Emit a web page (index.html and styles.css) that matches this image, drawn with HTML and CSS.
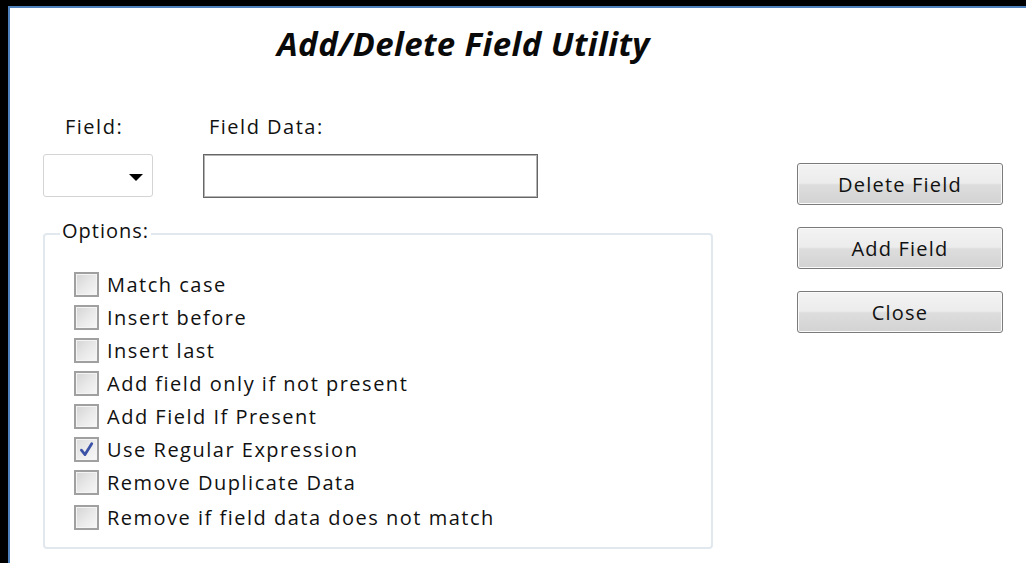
FILE: index.html
```html
<!DOCTYPE html>
<html lang="en">
<head>
<meta charset="utf-8">
<title>Add/Delete Field Utility</title>
<link rel="stylesheet" href="styles.css">
</head>
<body>
<div class="screen">
  <div class="dialog">
    <h1 class="title">Add/Delete Field Utility</h1>
    <div class="main">
      <div class="form">
        <div class="field-row">
          <div class="field-col">
            <div class="label label-field">Field:</div>
            <div class="combo"><span class="combo-arrow"></span></div>
          </div>
          <div class="data-col">
            <div class="label label-data">Field Data:</div>
            <div class="text-input"></div>
          </div>
        </div>
        <fieldset class="options">
          <legend class="options-legend">Options:</legend>
          <ul class="option-list">
            <li class="option"><span class="check"></span>Match case</li>
            <li class="option"><span class="check"></span>Insert before</li>
            <li class="option"><span class="check"></span>Insert last</li>
            <li class="option"><span class="check"></span>Add field only if not present</li>
            <li class="option"><span class="check"></span>Add Field If Present</li>
            <li class="option"><span class="check checked"><svg viewBox="0 0 16 16" width="17" height="17"><path d="M3.2 8.6 L6.6 12.8 L12.9 2.6" fill="none" stroke="#3b52a6" stroke-width="2.6" stroke-linecap="round" stroke-linejoin="round"/></svg></span>Use Regular Expression</li>
            <li class="option"><span class="check"></span>Remove Duplicate Data</li>
            <li class="option option-last"><span class="check"></span>Remove if field data does not match</li>
          </ul>
        </fieldset>
      </div>
      <div class="actions">
        <button class="btn" type="button">Delete Field</button>
        <button class="btn" type="button">Add Field</button>
        <button class="btn" type="button">Close</button>
      </div>
    </div>
  </div>
</div>
</body>
</html>
```

FILE: styles.css
```css
html, body {
  margin: 0;
  padding: 0;
  background: #000;
}

body {
  font-family: "Open Sans", "Noto Sans", sans-serif;
  color: #111;
}

.screen {
  height: 563px;
  box-sizing: border-box;
  padding: 6px 0 0 8px;
}

.dialog {
  height: 100%;
  box-sizing: border-box;
  background: #fff;
  border-top: 2px solid #4f81bd;
  border-left: 2px solid #4f81bd;
}

/* heading */
.title {
  margin: 0;
  padding: 16px 0 0 267px;
  font-size: 33px;
  line-height: 40px;
  letter-spacing: 0.4px;
  font-weight: 700;
  font-style: italic;
  color: #0a0a0a;
}

.main {
  display: flex;
}

.form {
  padding-left: 33px;
  width: 670px;
}

.field-row {
  display: flex;
  margin-top: 51px;
}

.field-col {
  width: 110px;
}

.data-col {
  margin-left: 50px;
}

.label {
  font-size: 20px;
  line-height: 24px;
  letter-spacing: 1.5px;
  margin-bottom: 15px;
}

.label-field {
  padding-left: 22px;
}

.label-data {
  padding-left: 6px;
}

/* dropdown box */
.combo {
  box-sizing: border-box;
  width: 110px;
  height: 43px;
  border: 1px solid #d4d4d4;
  border-radius: 3px;
  display: flex;
  align-items: center;
  justify-content: flex-end;
  padding: 3px 9px 0 0;
}

.combo-arrow {
  width: 0;
  height: 0;
  border-left: 7px solid transparent;
  border-right: 7px solid transparent;
  border-top: 7px solid #000;
}

.text-input {
  box-sizing: border-box;
  width: 335px;
  height: 44px;
  border: 1px solid #666;
  box-shadow: inset 0 0 0 1px #b4b4b4;
}

/* options group */
.options {
  box-sizing: border-box;
  width: 670px;
  height: 330px;
  margin: 21px 0 0;
  padding: 0 0 0 29px;
  border: 2px solid #e1e8ee;
  border-radius: 4px;
}

.options-legend {
  margin-left: -14px;
  padding: 0 2px 6px;
  font-size: 20px;
  line-height: 24px;
  letter-spacing: 1px;
}

.option-list {
  list-style: none;
  margin: 0;
  padding: 19px 0 0;
}

.option {
  display: flex;
  align-items: center;
  height: 33px;
  font-size: 20px;
  line-height: 25px;
  letter-spacing: 1.5px;
}

.option-last {
  margin-top: 2px;
}

.check {
  box-sizing: border-box;
  width: 25px;
  height: 25px;
  margin-right: 8px;
  border: 2px solid #a0a0a0;
  box-shadow: inset 0 0 0 1px #f4f4f4;
  background: linear-gradient(135deg, #d4d4d4 0%, #e8e8e8 50%, #f7f7f7 100%);
  display: flex;
  align-items: center;
  justify-content: center;
}

.check.checked {
  background: linear-gradient(135deg, #dcdcdc 0%, #ececec 50%, #f8f8f8 100%);
}

/* command buttons */
.actions {
  display: flex;
  flex-direction: column;
  gap: 22px;
  margin-left: 84px;
  padding-top: 99px;
}

.btn {
  box-sizing: border-box;
  width: 206px;
  height: 42px;
  border: 1px solid #7b7b7b;
  border-radius: 3px;
  box-shadow: inset 0 0 0 1px #fafafa;
  background: linear-gradient(#f3f3f3 0%, #ececec 48%, #dddddd 52%, #d3d3d3 100%);
  font-family: "Open Sans", "Noto Sans", sans-serif;
  font-size: 20px;
  letter-spacing: 1.2px;
  color: #111;
  padding: 0;
}
```
